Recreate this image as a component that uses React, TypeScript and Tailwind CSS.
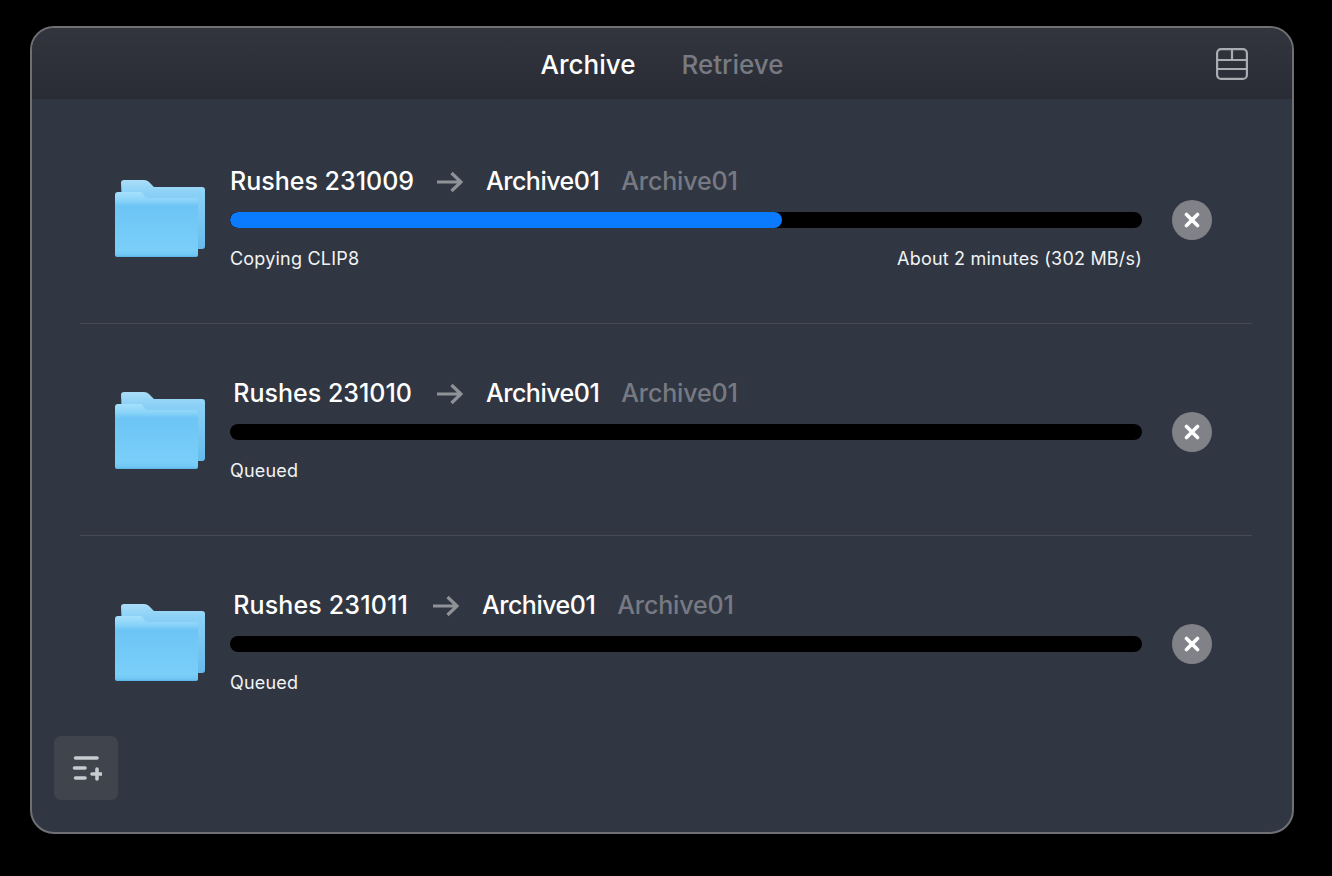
import React from "react";

const rows = [
  { name: "Rushes 231009", nameW: "w-[183px]", nameT: "tracking-[0px]", gapA: "ml-[24px]", sub: "Copying CLIP8", right: "About 2 minutes (302 MB/s)", pct: "60.5%" },
  { name: "Rushes 231010", nameW: "w-[182px]", nameT: "tracking-[0px]", gapA: "ml-[25px]", sub: "Queued", right: "", pct: "0%" },
  { name: "Rushes 231011", nameW: "w-[178px]", nameT: "tracking-[0.15px]", gapA: "ml-[25px]", sub: "Queued", right: "", pct: "0%" },
];

function Folder({ id }: { id: number }) {
  return (
    <svg width="92" height="78" viewBox="0 0 92 78" className="block">
      <defs>
        <linearGradient id={`fb${id}`} x1="0" y1="0" x2="0" y2="1">
          <stop offset="0" stopColor="#a9def9" />
          <stop offset="0.2" stopColor="#8ad0f6" />
          <stop offset="1" stopColor="#66bcec" />
        </linearGradient>
        <linearGradient id={`ff${id}`} x1="0" y1="0" x2="0" y2="1">
          <stop offset="0" stopColor="#a6e0fb" />
          <stop offset="0.13" stopColor="#8ad4f9" />
          <stop offset="0.22" stopColor="#6cc5f5" />
          <stop offset="0.9" stopColor="#7acff9" />
          <stop offset="0.97" stopColor="#6fc6f4" />
          <stop offset="1" stopColor="#5bb3e4" />
        </linearGradient>
      </defs>
      <path d="M7 3Q7 0 10 0H30Q33 0 35 2L40 7H88Q91 7 91 10V66Q91 69 88 69H10Z" fill={`url(#fb${id})`} />
      <path d="M1 15Q1 12 4 12H26Q28 12 29 14L31 17Q32 18 34 18H81Q84 18 84 21V75Q84 77 81 77H4Q1 77 1 75Z" fill={`url(#ff${id})`} />
    </svg>
  );
}

export default function App() {
  return (
    <div
      className="h-[876px] w-[1332px] overflow-hidden bg-black pl-[30px] pt-[26px]"
      style={{ fontFamily: "Inter, 'Noto Sans', sans-serif" }}
    >
      <div className="flex h-[808px] w-[1264px] flex-col overflow-hidden rounded-[24px] border-2 border-[#6e7074] bg-[#313742]">
        <header className="grid h-[71px] grid-cols-[1fr_auto_1fr] items-center bg-gradient-to-b from-[#32353d] to-[#292c35]">
          <div />
          <div className="mt-[3px] flex items-center gap-[46px] text-[26px] font-[450] leading-[36px]">
            <span className="text-white">Archive</span>
            <span className="text-[#777a83]">Retrieve</span>
          </div>
          <div className="flex justify-end pr-[44px]">
            <svg width="32" height="32" viewBox="0 0 32 32" fill="none" stroke="#a9acb1" strokeWidth="2.2">
              <rect x="1.1" y="1.1" width="29.8" height="29.8" rx="4" />
              <path d="M1 12H31M1 21H31M16 1V12" />
            </svg>
          </div>
        </header>

        <main className="flex flex-col pt-[13px]">
          {rows.map((r, i) => (
            <div key={r.name} className={i < 2 ? "ml-[48px] mr-[40px] border-b border-[#454a54]" : "ml-[48px] mr-[40px]"}>
              <div className={`flex items-start pl-[34px] pt-[50px] ${i < 2 ? "pb-[55px]" : ""}`}>
                <div className="mt-[18px] w-[116px] shrink-0">
                  <Folder id={i} />
                </div>
                <div className="w-[912px] shrink-0">
                  <div className="flex h-[38px] items-center pt-[2px] text-[25px] font-[450] text-white">
                    <span className={`${r.nameW} ${r.nameT} whitespace-nowrap text-right`}>{r.name}</span>
                    <svg className={r.gapA} width="26" height="22" viewBox="0 0 26 22" fill="none" stroke="#8f9297" strokeWidth="3.2">
                      <path d="M0 11H24M14.5 2L24 11L14.5 20" />
                    </svg>
                    <span className="ml-[23px] whitespace-nowrap tracking-[-0.5px]">Archive01</span>
                    <span className="ml-[22px] whitespace-nowrap tracking-[-0.15px] text-[#777a83]">Archive01</span>
                  </div>
                  <div className="mt-[12px] h-[16px] w-full overflow-hidden rounded-full bg-black">
                    <div className="h-full rounded-full bg-[#0a7aff]" style={{ width: r.pct }} />
                  </div>
                  <div className="mt-[20px] flex h-[20px] items-center justify-between text-[18px] tracking-[0.2px] text-[#f2f3f4]">
                    <span>{r.sub}</span>
                    <span>{r.right}</span>
                  </div>
                </div>
                <div className="ml-[30px] mt-[38px] flex h-[40px] w-[40px] shrink-0 items-center justify-center rounded-full bg-[#808288]">
                  <svg width="16" height="16" viewBox="0 0 16 16" fill="none" stroke="#ffffff" strokeWidth="3.6" strokeLinecap="round">
                    <path d="M2.5 2.5L13.5 13.5M13.5 2.5L2.5 13.5" />
                  </svg>
                </div>
              </div>
            </div>
          ))}
        </main>

        <button className="ml-[22px] mt-[44px] flex h-[64px] w-[64px] items-center justify-center rounded-[7px] bg-[#3f444d]">
          <svg width="32" height="28" viewBox="0 0 32 28" fill="none" stroke="#c8cbd0" strokeWidth="3.6" strokeLinecap="round">
            <path d="M5.5 4H27M4.5 14H15M5.5 24H15M27 15V25M22 20H32" />
          </svg>
        </button>
      </div>
    </div>
  );
}
